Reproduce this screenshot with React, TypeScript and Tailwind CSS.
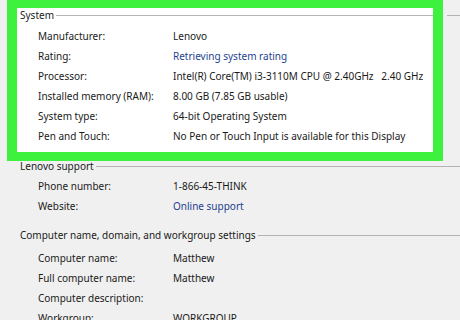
import React from 'react';

type Row = { label: string; value?: string; link?: boolean };

const systemRows: Row[] = [
  { label: 'Manufacturer:', value: 'Lenovo' },
  { label: 'Rating:', value: 'Retrieving system rating', link: true },
  { label: 'Processor:', value: 'Intel(R) Core(TM) i3-3110M CPU @ 2.40GHz\u00a0\u00a0\u00a02.40 GHz' },
  { label: 'Installed memory (RAM):', value: '8.00 GB (7.85 GB usable)' },
  { label: 'System type:', value: '64-bit Operating System' },
  { label: 'Pen and Touch:', value: 'No Pen or Touch Input is available for this Display' },
];

const supportRows: Row[] = [
  { label: 'Phone number:', value: '1-866-45-THINK' },
  { label: 'Website:', value: 'Online support', link: true },
];

const computerRows: Row[] = [
  { label: 'Computer name:', value: 'Matthew' },
  { label: 'Full computer name:', value: 'Matthew' },
  { label: 'Computer description:' },
  { label: 'Workgroup:', value: 'WORKGROUP' },
];

const InfoRows: React.FC<{ rows: Row[]; className?: string }> = ({ rows, className }) => (
  <div className={`grid grid-cols-[135px_auto] auto-rows-[20px] items-center whitespace-nowrap pl-[18px] ${className ?? ''}`}>
    {rows.map((r) => (
      <React.Fragment key={r.label}>
        <span>{r.label}</span>
        <span className={r.link ? 'text-[#1e3f8f]' : ''}>{r.value ?? ''}</span>
      </React.Fragment>
    ))}
  </div>
);

const GroupHeader: React.FC<{ title: string; className: string }> = ({ title, className }) => (
  <div className={`flex items-center gap-[2px] ${className}`}>
    <span className="whitespace-nowrap">{title}</span>
    <div className="flex-1 h-px bg-[#b4b4b4]" />
  </div>
);

const App: React.FC = () => {
  return (
    <div className="w-[460px] h-[320px] overflow-hidden bg-[#f0f0f0] text-[#1a1a1a] text-[10px] leading-[14px] font-['Noto_Sans',sans-serif]">
      {/* System group, highlighted */}
      <div className="flex">
        <div className="ml-[7px] w-[436px] shrink-0 border-x-[10px] border-t-[8px] border-b-[9px] border-[#3ef13e] bg-white pl-[3px] pb-[6px]">
          <GroupHeader title="System" className="h-[14px]" />
          <InfoRows rows={systemRows} className="mt-[4px]" />
        </div>
        <div className="flex-1 pt-[15px] pl-[4px]">
          <div className="h-px bg-[#b4b4b4]" />
        </div>
      </div>

      <div className="pl-[20px]">
        {/* Lenovo support */}
        <GroupHeader title="Lenovo support" className="h-[10px]" />
        <InfoRows rows={supportRows} className="mt-[5px]" />

        {/* Computer name, domain and workgroup */}
        <GroupHeader title="Computer name, domain, and workgroup settings" className="h-[14px] mt-[12px]" />
        <InfoRows rows={computerRows} className="mt-[6px]" />
      </div>
    </div>
  );
};

export default App;
